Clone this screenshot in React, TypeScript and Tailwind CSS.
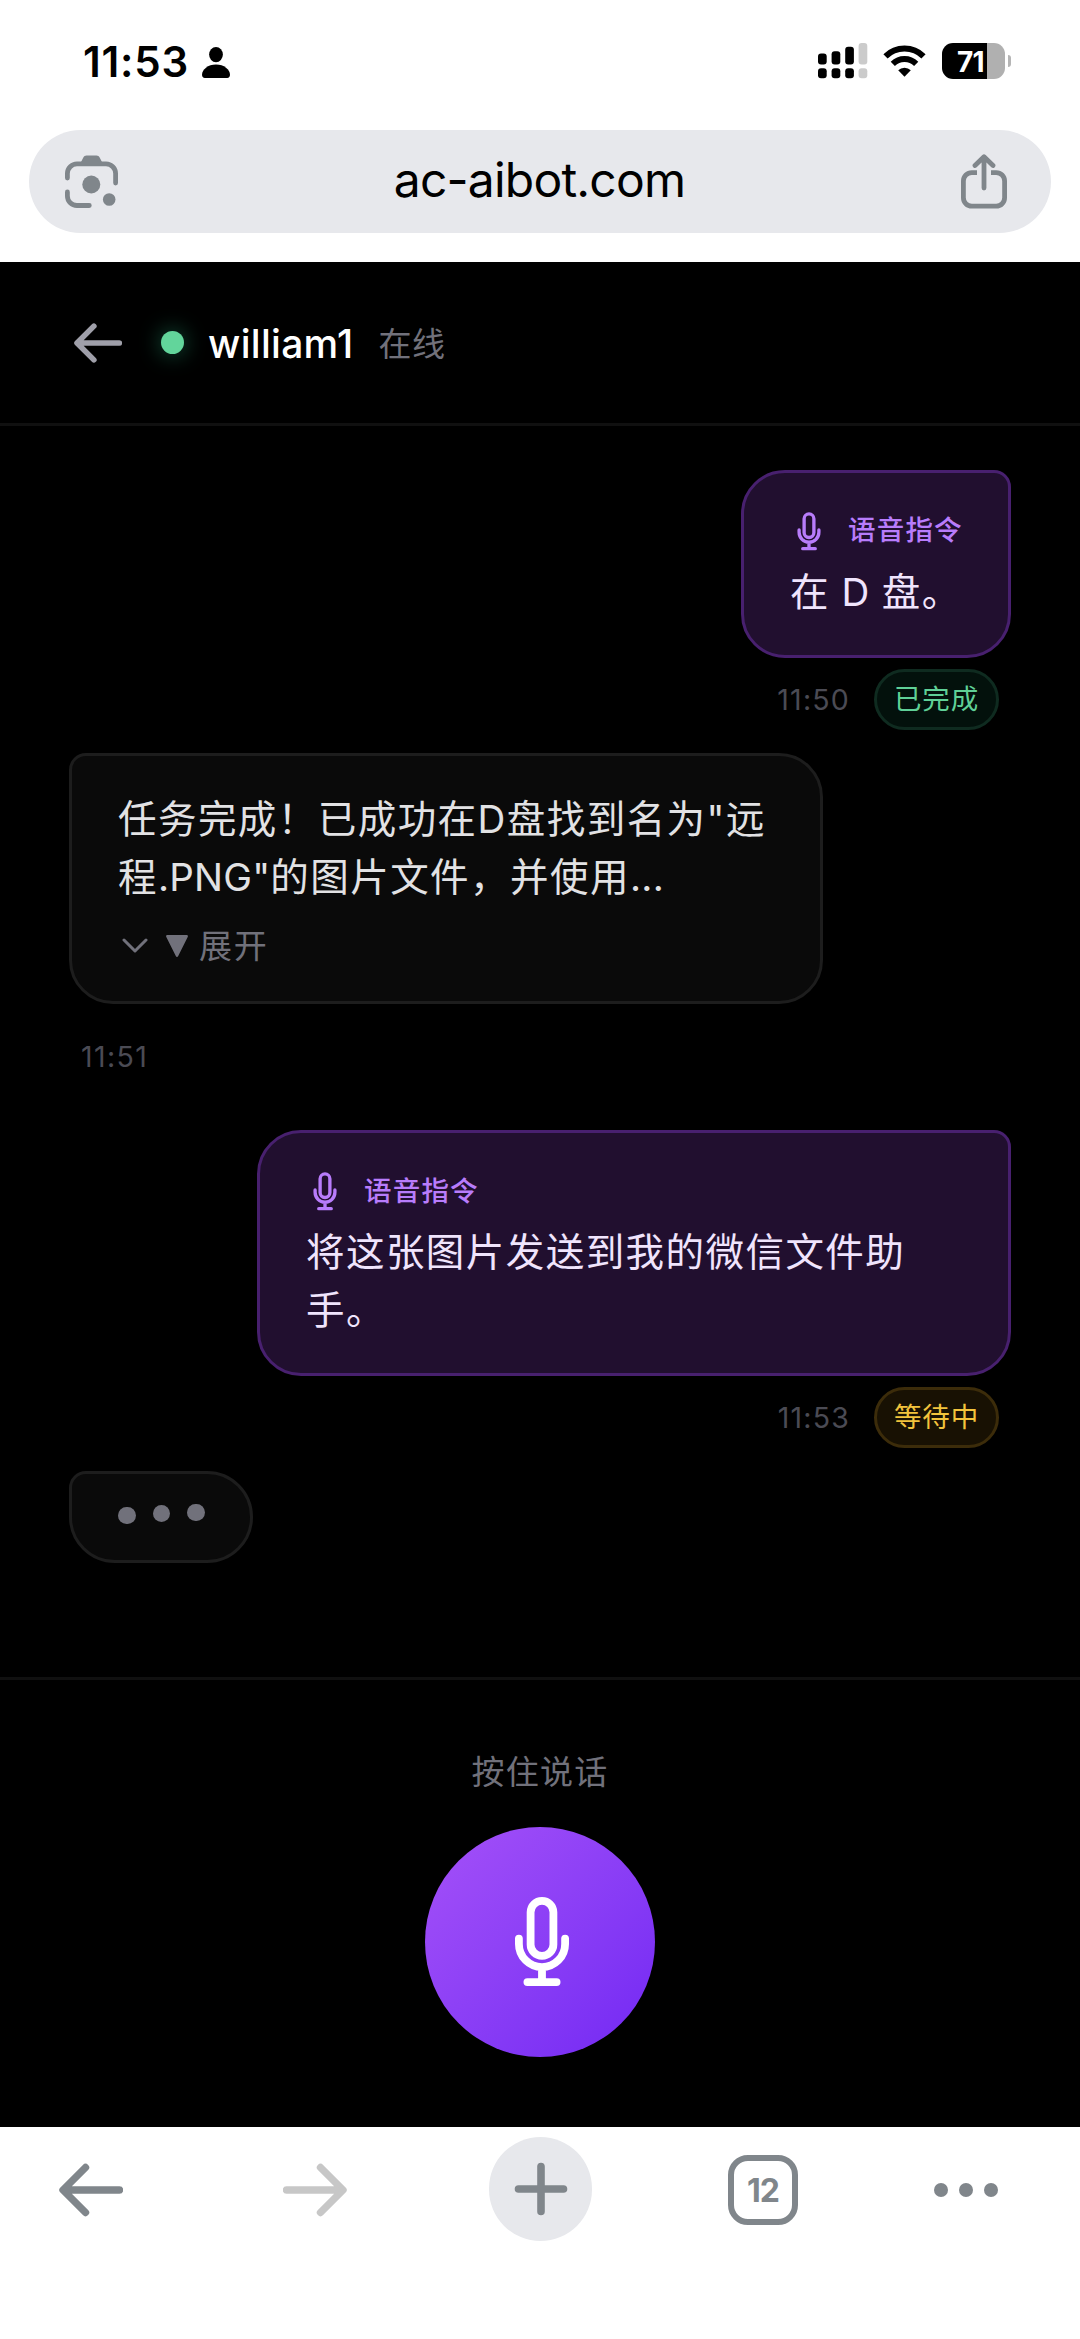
import type { ReactNode } from "react";

type Status = "done" | "waiting";

function MicIcon({ className }: { className?: string }) {
  return (
    <svg viewBox="0 0 56 90" fill="none" stroke="currentColor" strokeWidth="7.8" strokeLinecap="round" className={className}>
      <rect x="16.6" y="3.9" width="22.8" height="55" rx="11.4" />
      <path d="M4.9 41.6V47a23.1 23.1 0 0 0 46.2 0v-5.4M28 71v13M13.4 85.1h29.2" />
    </svg>
  );
}

function BackArrow({ className }: { className?: string }) {
  return (
    <svg viewBox="0 0 64 54" fill="none" stroke="currentColor" strokeWidth="7.4" strokeLinecap="round" strokeLinejoin="round" className={className}>
      <path d="M26.5 4.5L4 27l22.5 22.5M5 27h55.5" />
    </svg>
  );
}

function StatusBar() {
  return (
    <div className="flex h-[122px] shrink-0 items-center justify-between pl-[83px] pr-[69px]">
      <div className="flex items-center pt-[2px]">
        <span className="text-[42px] font-semibold leading-none tracking-[0.8px] text-black">11:53</span>
        <svg viewBox="0 0 28 31" className="ml-[13px] h-[31px] w-[28px]" fill="#000">
          <ellipse cx="14" cy="7.6" rx="6.9" ry="7.6" />
          <path d="M14 17.6c8 0 14 5 14 10.2 0 2-1 3.2-2.8 3.2H2.8C1 31 0 29.8 0 27.8 0 22.6 6 17.6 14 17.6z" />
        </svg>
      </div>
      <div className="flex items-center">
        <svg viewBox="0 0 50 36" className="h-[36px] w-[50px]" fill="#000">
          <rect x="0" y="10.5" width="8.7" height="11" rx="3" />
          <rect x="13.6" y="8.3" width="8.7" height="13.2" rx="3" />
          <rect x="27.2" y="3.8" width="8.7" height="17.7" rx="3" />
          <rect x="40.6" y="0" width="8.7" height="21.5" rx="3" fill="#cbcbcb" />
          <rect x="0" y="25.2" width="8.7" height="10" rx="3" />
          <rect x="13.6" y="25.2" width="8.7" height="10" rx="3" />
          <rect x="27.2" y="25.2" width="8.7" height="10" rx="3" />
          <rect x="40.6" y="25.2" width="8.7" height="10" rx="3" fill="#cbcbcb" />
        </svg>
        <svg viewBox="0 0 43 32" className="ml-[15px] h-[32px] w-[43px]">
          <path d="M2.5 11.3a27 27 0 0 1 38 0" fill="none" stroke="#000" strokeWidth="6" />
          <path d="M9.8 18.8a16.8 16.8 0 0 1 23.4 0" fill="none" stroke="#000" strokeWidth="6" />
          <path d="M21.5 31.8l-6.3-6.6a9 9 0 0 1 12.6 0z" fill="#000" />
        </svg>
        <div className="ml-4 flex h-[36px] w-[63px] items-center overflow-hidden rounded-[11px] bg-[linear-gradient(90deg,#000_45px,#b0b0b0_45px)]">
          <span className="pl-[15px] pt-px text-[28px] font-bold leading-none tracking-[-0.8px] text-white">71</span>
        </div>
        <div className="ml-[3px] h-[12px] w-[3px] rounded-r-full bg-[#b5b5b5]" />
      </div>
    </div>
  );
}

function AddressBar() {
  return (
    <div className="mx-[29px] mt-2 mb-[29px] flex h-[103px] shrink-0 items-center justify-between rounded-full bg-[#e7e8ec] pl-9 pr-[44px] text-[#80868b]">
      <svg viewBox="0 0 53 53" className="h-[53px] w-[53px]" fill="none" stroke="currentColor" strokeWidth="4.8" strokeLinecap="round">
        <path d="M2.4 23V18.5a9.6 9.6 0 0 1 9.6-9.6h29a9.6 9.6 0 0 1 9.6 9.6V28" />
        <path d="M2.4 37v4a9.5 9.5 0 0 0 9.6 9.5h12.3" />
        <path d="M15 9l3.2-6.2c.8-1.6 1.8-2.3 3.3-2.3h10c1.5 0 2.5.7 3.3 2.3L38 9z" fill="currentColor" stroke="none" />
        <circle cx="26.3" cy="29.5" r="9" fill="currentColor" stroke="none" />
        <circle cx="44.2" cy="44.5" r="6.3" fill="currentColor" stroke="none" />
      </svg>
      <span className="pb-1 text-[48px] leading-none tracking-[-0.8px] text-black">ac-aibot.com</span>
      <svg viewBox="0 0 46 55" className="h-[55px] w-[46px]" fill="none" stroke="currentColor" strokeWidth="4.8">
        <path d="M16 18.6h-5.2a8.4 8.4 0 0 0-8.4 8.4v16.8a8.4 8.4 0 0 0 8.4 8.4h24.4a8.4 8.4 0 0 0 8.4-8.4V27a8.4 8.4 0 0 0-8.4-8.4H30" />
        <path d="M23 34V3M14 11.5L23 2.7l9 8.8" strokeLinecap="round" strokeLinejoin="round" />
      </svg>
    </div>
  );
}

function ChatHeader() {
  return (
    <div className="flex h-[164px] shrink-0 items-center border-b-[3px] border-[#101010] pl-[74px]">
      <BackArrow className="h-[42px] w-[48px] text-[#9f9fa9]" />
      <span className="ml-[39px] h-[23px] w-[23px] rounded-full bg-[#62d59b] shadow-[0_0_22px_rgba(52,211,153,0.45)]" />
      <span className="ml-6 pt-px text-[39px] font-medium leading-none tracking-[0.3px] text-white">william1</span>
      <span className="ml-[25px] pt-1 text-[33px] leading-none tracking-[0.5px] text-[#71717b]">在线</span>
    </div>
  );
}

function StatusBadge({ status }: { status: Status }) {
  return (
    <span
      className={`flex h-[61px] w-[125px] items-center justify-center rounded-full border-[3px] pt-px text-[27.5px] leading-none tracking-[0.9px] ${
        status === "done"
          ? "border-[#0f2b20] bg-[#03110c] text-[#5fd097]"
          : "border-[#3c2c0a] bg-[#181103] text-[#f2c33c]"
      }`}
    >
      {status === "done" ? "已完成" : "等待中"}
    </span>
  );
}

function VoiceMessage({ time, status, width, children }: { time: string; status: Status; width: string; children: ReactNode }) {
  return (
    <div className="flex flex-col items-end">
      <div className={`${width} rounded-[44px] rounded-tr-[17px] border-[3px] border-[#48206f] bg-[#210f2f] pb-[33px] pl-[46px] pt-[34px]`}>
        <div className="mb-[9px] flex h-12 items-center text-[#b87cfb]">
          <MicIcon className="ml-[7px] h-[39px] w-[24px]" />
          <span className="ml-[27px] text-[27.5px] font-medium leading-none tracking-[1.2px]">语音指令</span>
        </div>
        <p className="whitespace-nowrap text-[38.5px] leading-[57.75px] tracking-[1.45px] text-[#f0e4fd]">{children}</p>
      </div>
      <div className="mt-[11.5px] flex h-[60px] items-center pr-3">
        <span className="mr-6 pt-px text-[28.5px] leading-none tracking-[1.2px] text-[#4b4b54]">{time}</span>
        <StatusBadge status={status} />
      </div>
    </div>
  );
}

function ReplyMessage() {
  return (
    <div className="flex flex-col items-start">
      <div className="h-[251px] w-[754px] rounded-[44px] rounded-tl-[17px] border-[3px] border-[#1d1d1d] bg-[#0a0a0a] pl-[46px] pt-[35px]">
        <p className="whitespace-nowrap text-[38.5px] leading-[57.75px] tracking-[1.45px] text-[#e2e2e4]">
          任务完成！已成功在D盘找到名为"远
          <br />
          程<span className="tracking-[0.2px]">.PNG"</span>的图片文件，并使用<span className="tracking-[0.3px]">...</span>
        </p>
        <div className="mt-[14px] flex h-[50px] items-center text-[#71717b]">
          <svg viewBox="0 0 26 15" className="ml-1 h-[15px] w-[26px]" fill="none" stroke="currentColor" strokeWidth="3" strokeLinecap="round" strokeLinejoin="round">
            <path d="M2 2l11 11L24 2" />
          </svg>
          <svg viewBox="0 0 22 22" className="ml-[18px] h-[22px] w-[22px]" fill="currentColor">
            <path d="M1.5 0h19c1.2 0 1.7 1 1.2 2l-9.5 19c-.6 1.2-1.800 1.2-2.400 0L.3 2C-.2 1 .3 0 1.5 0z" />
          </svg>
          <span className="ml-[11px] pt-px text-[33px] leading-none tracking-[1.8px]">展开</span>
        </div>
      </div>
      <span className="ml-3 mt-[39px] text-[28.5px] leading-[28px] tracking-[1.4px] text-[#4b4b54]">11:51</span>
    </div>
  );
}

function TypingBubble() {
  return (
    <div className="flex h-[92px] w-[184px] items-start gap-[17px] rounded-[46px] rounded-tl-[17px] border-[3px] border-[#1d1d1d] bg-[#0a0a0a] pl-[46px]">
      <span className="mt-[33px] h-[17.6px] w-[17.6px] rounded-full bg-[#71717b]" />
      <span className="mt-[31px] h-[17.6px] w-[17.6px] rounded-full bg-[#71717b]" />
      <span className="mt-[30px] h-[17.6px] w-[17.6px] rounded-full bg-[#71717b]" />
    </div>
  );
}

function BrowserToolbar() {
  return (
    <div className="flex h-[126px] shrink-0 items-center pl-[59px] text-[#80868b]">
      <BackArrow className="h-[54px] w-[64px]" />
      <BackArrow className="ml-[160px] h-[54px] w-[64px] rotate-180 text-[#c7c7c7]" />
      <div className="ml-[142px] mb-[2px] flex h-[104px] w-[103px] items-center justify-center rounded-full bg-[#e7e8ec]">
        <svg viewBox="0 0 54 54" className="h-[54px] w-[54px]" stroke="currentColor" strokeWidth="7.6" strokeLinecap="round">
          <path d="M27 4.5v45M4.5 27h45" />
        </svg>
      </div>
      <div className="ml-[136px] flex h-[70px] w-[70px] items-center justify-center rounded-[20px] border-[6.5px] border-[#80868b]">
        <span className="pt-px text-[32px] font-bold leading-none tracking-[-1px]">12</span>
      </div>
      <div className="ml-[136px] flex gap-[11px]">
        <span className="h-[14px] w-[14px] rounded-full bg-[#80868b]" />
        <span className="h-[14px] w-[14px] rounded-full bg-[#80868b]" />
        <span className="h-[14px] w-[14px] rounded-full bg-[#80868b]" />
      </div>
    </div>
  );
}

export default function App() {
  return (
    <div className="flex h-[2339px] w-[1080px] flex-col overflow-hidden bg-white font-['Inter','Noto_Sans_CJK_SC',sans-serif]">
      <StatusBar />
      <AddressBar />

      <div className="flex h-[1865px] shrink-0 flex-col bg-black">
        <ChatHeader />

        <div className="flex flex-1 flex-col px-[69px] pt-11">
          <VoiceMessage time="11:50" status="done" width="w-[270px]">
            在<span className="tracking-[0.8px]"> D </span>盘。
          </VoiceMessage>
          <div className="mt-6">
            <ReplyMessage />
          </div>
          <div className="mt-[59px]">
            <VoiceMessage time="11:53" status="waiting" width="w-[754px]">
              将这张图片发送到我的微信文件助
              <br />
              手。
            </VoiceMessage>
          </div>
          <div className="mt-[23.5px]">
            <TypingBubble />
          </div>
        </div>

        <div className="flex h-[450px] shrink-0 flex-col items-center border-t-[3px] border-[#101010]">
          <span className="mt-[75px] text-[33px] leading-[34px] tracking-[1.3px] text-[#71717b]">按住说话</span>
          <button className="mt-[38px] flex h-[230px] w-[230px] items-center justify-center rounded-full bg-linear-to-br from-[#a550f8] to-[#7326f3] text-white">
            <MicIcon className="ml-[3px] h-[90px] w-[56px]" />
          </button>
        </div>
      </div>

      <BrowserToolbar />
    </div>
  );
}
